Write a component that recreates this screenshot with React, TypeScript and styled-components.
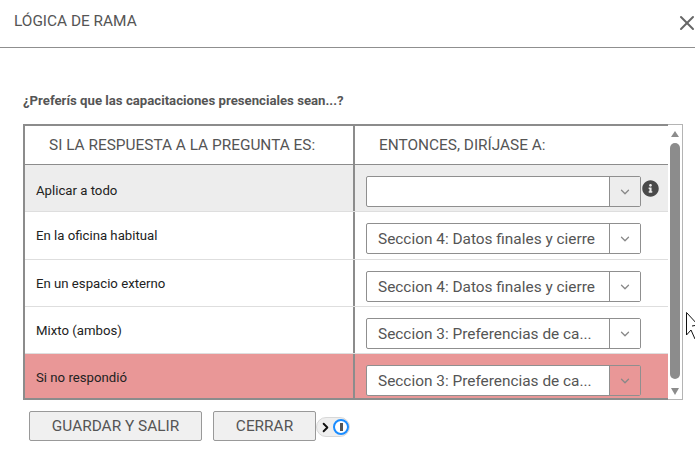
import styled, { createGlobalStyle } from 'styled-components'
import { ChevronDown, ChevronRight, X } from 'lucide-react'
import { FaInfoCircle } from 'react-icons/fa'

const GlobalStyle = createGlobalStyle`
  html, body {
    margin: 0;
    padding: 0;
    background: #fff;
  }
  body {
    font-family: Roboto, "Liberation Sans", sans-serif;
    overflow: hidden;
  }
`

const Modal = styled.div`
  position: relative;
  width: 695px;
  height: 462px;
  overflow: hidden;
`

const Header = styled.header`
  height: 47px;
  box-sizing: content-box;
  border-bottom: 1px solid #8f8f8f;
  display: flex;
  align-items: center;
  justify-content: space-between;
  padding: 0 0 0 14px;
`

const ModalTitle = styled.h1`
  margin: 0 0 5px;
  font-size: 15.4px;
  font-weight: 400;
  color: #555;
`

const CloseButton = styled.button`
  border: 0;
  background: none;
  padding: 0;
  margin: 0 -4px 2px 0;
  width: 24px;
  height: 24px;
  color: #666;
  display: flex;
`

const Question = styled.p`
  margin: 46px 0 0 23px;
  height: 13px;
  line-height: 13px;
  font-size: 13.2px;
  font-weight: 700;
  color: #555;
  white-space: nowrap;
`

const Table = styled.div`
  margin: 17px 0 0 23px;
  width: 660px;
  height: 276px;
  display: flex;
`

const TableMain = styled.div`
  flex: 1;
  border: 2px solid #8c8c8c;
  border-right: 0;
  display: flex;
  flex-direction: column;
  min-width: 0;
`

const HeadRow = styled.div`
  height: 38px;
  flex: none;
  display: grid;
  grid-template-columns: 328px 1fr;
  border-bottom: 1px solid #8c8c8c;
`

const HeadCell = styled.div<{ $divider?: boolean }>`
  display: flex;
  align-items: center;
  padding-left: 24px;
  font-size: 15.4px;
  color: #555;
  border-left: ${(p) => (p.$divider ? '2px solid #8c8c8c' : '0')};
`

const Rows = styled.div`
  flex: 1;
  display: grid;
  grid-template-rows: 47px 48px 47px 47px 1fr;
  overflow: hidden;
`

const Row = styled.div<{ $tone?: 'grey' | 'pink' }>`
  display: grid;
  grid-template-columns: 328px 1fr;
  background: ${(p) =>
    p.$tone === 'grey' ? '#ededed' : p.$tone === 'pink' ? '#e99797' : '#fff'};
  border-bottom: ${(p) => (p.$tone === 'pink' ? '0' : '1px solid #dedede')};
`

const Label = styled.div<{ $low?: boolean }>`
  padding: ${(p) => (p.$low ? '18px' : '16px')} 0 0 11px;
  font-size: 13.2px;
  line-height: 15px;
  color: #222;
`

const SelectCell = styled.div`
  border-left: 2px solid #8c8c8c;
  padding: 11px 0 0 11px;
  display: flex;
  align-items: flex-start;
`

const SelectBox = styled.div`
  width: 275px;
  height: 31px;
  box-sizing: border-box;
  display: flex;
  border: 1px solid #8f8f8f;
  border-radius: 2px;
  background: #fff;
`

const SelectText = styled.span`
  flex: 1;
  min-width: 0;
  padding: 0 0 0 11px;
  line-height: 30px;
  font-size: 15.4px;
  color: #555;
  white-space: nowrap;
`

const SelectArrow = styled.span<{ $tone?: 'grey' | 'pink' }>`
  flex: none;
  width: 30px;
  border-left: 1px solid #8f8f8f;
  color: #888;
  display: flex;
  align-items: center;
  justify-content: center;
  background: ${(p) =>
    p.$tone === 'grey' ? '#ededed' : p.$tone === 'pink' ? '#e99797' : '#fff'};
`

const InfoIcon = styled.span`
  margin: 4px 0 0 1px;
  color: #4a4a4a;
  display: flex;
`

const Scrollbar = styled.div`
  flex: none;
  width: 15px;
  box-sizing: border-box;
  border: 1px solid #b4b4b4;
  border-left: 0;
  display: flex;
  flex-direction: column;
  align-items: center;
  padding-top: 6px;
`

const ArrowUp = styled.span`
  width: 0;
  height: 0;
  border-left: 4.5px solid transparent;
  border-right: 4.5px solid transparent;
  border-bottom: 6px solid #8c8c8c;
`

const ArrowDown = styled.span`
  width: 0;
  height: 0;
  margin-top: 9px;
  border-left: 4.5px solid transparent;
  border-right: 4.5px solid transparent;
  border-top: 7px solid #8c8c8c;
`

const Thumb = styled.span`
  width: 10px;
  height: 236px;
  margin-top: 6px;
  border-radius: 5px;
  background: #8c8c8c;
`

const Footer = styled.div`
  margin: 11px 0 0 29px;
  display: flex;
  align-items: center;
`

const Button = styled.button<{ $width: number }>`
  width: ${(p) => p.$width}px;
  height: 30px;
  margin-right: 11px;
  padding: 0;
  box-sizing: border-box;
  border: 1px solid #999;
  border-radius: 2px;
  background: #f0f0f0;
  font-family: inherit;
  font-size: 15.4px;
  color: #555;

  &:last-of-type {
    margin-right: 0;
  }
`

const ExtensionPill = styled.div`
  width: 34px;
  height: 20px;
  margin-top: 2px;
  box-sizing: border-box;
  border: 1px solid #d8d8d8;
  border-radius: 10px;
  background: #efefef;
  display: flex;
  align-items: center;
  padding-left: 1px;
  color: #111;
`

const PillRing = styled.span`
  width: 16px;
  height: 16px;
  box-sizing: border-box;
  border: 2.5px solid #1a8cff;
  border-radius: 50%;
  background: #fff;
  display: flex;
  align-items: center;
  justify-content: center;

  &::after {
    content: '';
    width: 3px;
    height: 8px;
    background: #555;
  }
`

const Cursor = styled.svg`
  position: absolute;
  left: 686px;
  top: 312px;
`

const rows = [
  { label: 'Aplicar a todo', value: '', tone: 'grey' as const },
  { label: 'En la oficina habitual', value: 'Seccion 4: Datos finales y cierre' },
  { label: 'En un espacio externo', value: 'Seccion 4: Datos finales y cierre' },
  { label: 'Mixto (ambos)', value: 'Seccion 3: Preferencias de ca...' },
  {
    label: 'Si no respondió',
    value: 'Seccion 3: Preferencias de ca...',
    tone: 'pink' as const,
  },
]

function App() {
  return (
    <Modal>
      <GlobalStyle />
      <Header>
        <ModalTitle>LÓGICA DE RAMA</ModalTitle>
        <CloseButton aria-label="Cerrar">
          <X size={24} strokeWidth={2} />
        </CloseButton>
      </Header>
      <Question>¿Preferís que las capacitaciones presenciales sean...?</Question>
      <Table>
        <TableMain>
          <HeadRow>
            <HeadCell>SI LA RESPUESTA A LA PREGUNTA ES:</HeadCell>
            <HeadCell $divider>ENTONCES, DIRÍJASE A:</HeadCell>
          </HeadRow>
          <Rows>
            {rows.map((row, i) => (
              <Row key={row.label} $tone={row.tone}>
                <Label $low={i === 0}>{row.label}</Label>
                <SelectCell>
                  <SelectBox>
                    <SelectText>{row.value}</SelectText>
                    <SelectArrow $tone={row.tone}>
                      <ChevronDown size={14} strokeWidth={2.2} />
                    </SelectArrow>
                  </SelectBox>
                  {i === 0 && (
                    <InfoIcon>
                      <FaInfoCircle size={17} />
                    </InfoIcon>
                  )}
                </SelectCell>
              </Row>
            ))}
          </Rows>
        </TableMain>
        <Scrollbar>
          <ArrowUp />
          <Thumb />
          <ArrowDown />
        </Scrollbar>
      </Table>
      <Footer>
        <Button $width={173}>GUARDAR Y SALIR</Button>
        <Button $width={103}>CERRAR</Button>
        <ExtensionPill>
          <ChevronRight size={15} strokeWidth={3} />
          <PillRing />
        </ExtensionPill>
      </Footer>
      <Cursor width="10" height="28" viewBox="0 0 10 28">
        <path d="M0.5 0.5 L0.5 23 L5 18 L9 27" fill="#fff" stroke="#111" strokeWidth="1" />
        <path d="M0.5 0.5 L12 13 L6 14" fill="#fff" stroke="#111" strokeWidth="1" />
      </Cursor>
    </Modal>
  )
}

export default App
